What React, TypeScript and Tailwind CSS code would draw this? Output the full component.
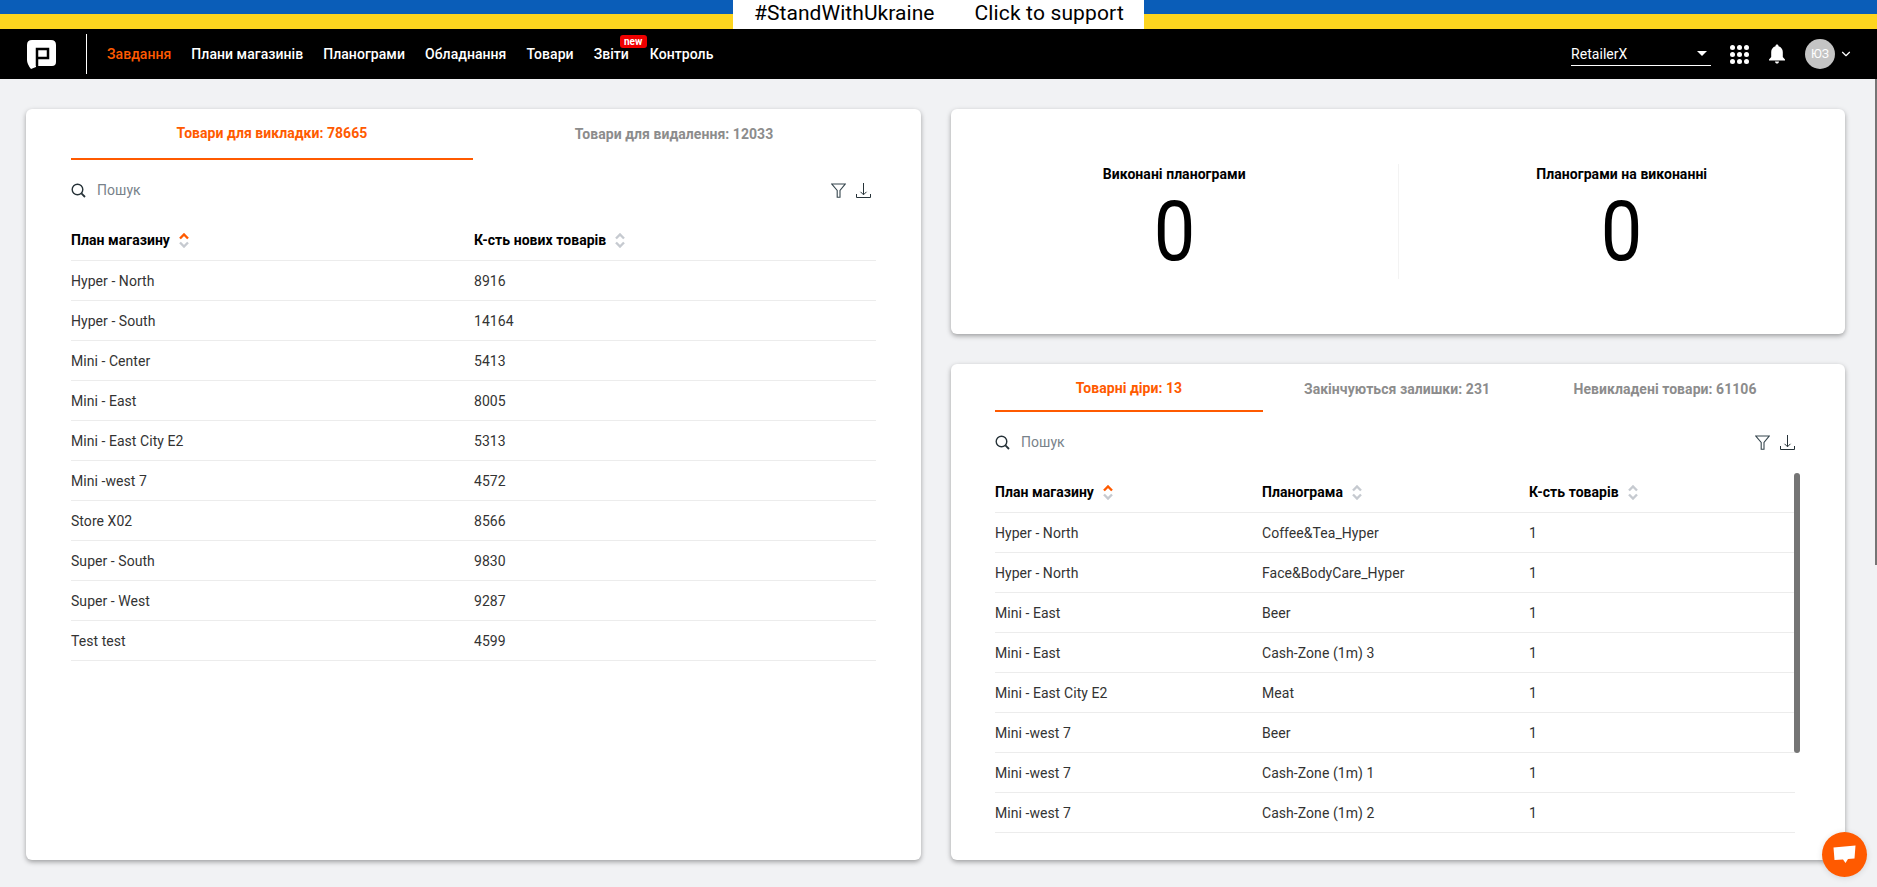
import { ChevronDown } from "lucide-react";

const storeRows = [
  ["Hyper - North", "8916"],
  ["Hyper - South", "14164"],
  ["Mini - Center", "5413"],
  ["Mini - East", "8005"],
  ["Mini - East City E2", "5313"],
  ["Mini -west 7", "4572"],
  ["Store X02", "8566"],
  ["Super - South", "9830"],
  ["Super - West", "9287"],
  ["Test test", "4599"],
];

const holeRows = [
  ["Hyper - North", "Coffee&Tea_Hyper", "1"],
  ["Hyper - North", "Face&BodyCare_Hyper", "1"],
  ["Mini - East", "Beer", "1"],
  ["Mini - East", "Cash-Zone (1m) 3", "1"],
  ["Mini - East City E2", "Meat", "1"],
  ["Mini -west 7", "Beer", "1"],
  ["Mini -west 7", "Cash-Zone (1m) 1", "1"],
  ["Mini -west 7", "Cash-Zone (1m) 2", "1"],
];

const navItems = ["Плани магазинів", "Планограми", "Обладнання", "Товари"];

function Logo() {
  return (
    <svg width="29" height="29" viewBox="0 0 29 29" className="shrink-0">
      <path d="M5 0H24Q29 0 29 5V22Q29 26 25 26H9V27L4 29Q0 24 0 20V5Q0 0 5 0Z" fill="#fff" />
      <path d="M10 26V9H21V18H10" fill="none" stroke="#000" strokeWidth="2.5" />
    </svg>
  );
}

function SortIcon({ active = false }: { active?: boolean }) {
  return (
    <svg width="10" height="15" viewBox="0 0 10 15" className="shrink-0">
      <path d="M1 5.5L5 1.5L9 5.5" fill="none" stroke={active ? "#ff5a00" : "#c6cad0"} strokeWidth="2.4" />
      <path d="M1 9.5L5 13.5L9 9.5" fill="none" stroke="#c6cad0" strokeWidth="2.4" />
    </svg>
  );
}

function Toolbar() {
  return (
    <div className="flex h-[40px] items-center justify-between">
      <div className="flex items-center gap-[11px]">
        <svg width="15" height="15" viewBox="0 0 15 15" fill="none" stroke="#263238" strokeWidth="1.4">
          <circle cx="6.5" cy="6.5" r="5.3" />
          <path d="M10.4 10.4L14 14" strokeWidth="1.8" />
        </svg>
        <span className="text-sm text-[#78828a]">Пошук</span>
      </div>
      <div className="flex items-center gap-[10px]">
        <svg width="15" height="15" viewBox="0 0 15 15" fill="none" stroke="#37474f" strokeWidth="1.1">
          <path d="M0.8 1H14.2L9 7.5V14.3H6.2V7.5Z" />
        </svg>
        <svg width="15" height="15" viewBox="0 0 15 15" fill="none" stroke="#263238" strokeWidth="1">
          <path d="M7.5 0V11.5M4.5 8.8L7.5 11.8L10.5 8.8" />
          <path d="M0.5 11V14.5H14.5V11" />
        </svg>
      </div>
    </div>
  );
}

function HeaderCell({ label, active = false, width }: { label: string; active?: boolean; width: string }) {
  return (
    <div className={`flex items-center gap-[9px] ${width}`}>
      <span className="text-sm font-bold text-black">{label}</span>
      <SortIcon active={active} />
    </div>
  );
}

export default function App() {
  return (
    <div className="relative flex h-screen flex-col overflow-hidden bg-[#f1f2f4] font-['Roboto',sans-serif] tracking-[0.05px]">
      {/* Banner */}
      <div className="relative h-[29px] shrink-0">
        <div className="h-[14px] bg-[#0a5db8]" />
        <div className="h-[15px] bg-[#fdd51f]" />
        <div className="absolute left-[733px] top-0 flex h-[29px] w-[411px] items-center justify-center gap-[40px] bg-white pb-[1px] pl-[1px] text-[21px] text-black">
          <span>#StandWithUkraine</span>
          <span className="tracking-[0.15px]">Click to support</span>
        </div>
      </div>

      {/* Navbar */}
      <header className="flex h-[50px] shrink-0 items-center bg-black pl-[27px] pr-[24px]">
        <Logo />
        <div className="ml-[30px] mr-[20px] h-[40px] w-px bg-white" />
        <nav className="flex items-center gap-5 text-sm font-medium text-white">
          <span className="text-[#ff5a00]">Завдання</span>
          {navItems.map((item) => (
            <span key={item}>{item}</span>
          ))}
          <span className="relative">
            Звіти
            <span className="absolute left-[26px] top-[-9px] flex h-[13px] w-[27px] items-center justify-center rounded-[3px] bg-[#f00000] text-[10px] font-bold leading-none text-white">
              new
            </span>
          </span>
          <span className="ml-px">Контроль</span>
        </nav>

        <div className="ml-auto flex items-center">
          <div className="flex h-[24px] w-[140px] items-center justify-between border-b border-white pr-[4px] text-sm text-white">
            <span>RetailerX</span>
            <span className="h-0 w-0 border-x-[5px] border-t-[5px] border-x-transparent border-t-white" />
          </div>
          <div className="ml-[19px] grid grid-cols-3 gap-[2px]">
            {Array.from({ length: 9 }).map((_, i) => (
              <span key={i} className="h-[5px] w-[5px] rounded-full bg-white" />
            ))}
          </div>
          <svg width="18" height="20" viewBox="0 0 18 20" fill="#fff" className="ml-[19px]">
            <path d="M9 0.5C8 0.5 7.5 1.2 7.5 2.2C4.8 3 3.2 5.2 3.2 8V13L1 15.5V16.5H17V15.5L14.8 13V8C14.8 5.2 13.2 3 10.5 2.2C10.5 1.2 10 0.5 9 0.5Z" />
            <path d="M7 17.5H11C11 18.8 10 19.6 9 19.6C8 19.6 7 18.8 7 17.5Z" />
          </svg>
          <div className="ml-[19px] flex h-[30px] w-[30px] items-center justify-center rounded-full bg-[#c4c4c4] text-xs text-white">
            ЮЗ
          </div>
          <ChevronDown className="ml-[4px] h-[14px] w-[14px] text-white" strokeWidth={2} />
        </div>
      </header>

      {/* Content */}
      <main className="flex flex-1 gap-[30px] pl-[26px] pr-[32px] pt-[30px] pb-[27px]">
        {/* Left card */}
        <section className="w-[895px] shrink-0 rounded-md bg-white px-[45px] shadow-[0_2px_5px_rgba(0,0,0,0.35)]">
          <div className="flex h-[51px] text-sm font-bold">
            <div className="flex w-[402px] items-center justify-center border-b-2 border-[#ff5a00] pb-[2px] text-[#ff5a00]">
              Товари для викладки: 78665
            </div>
            <div className="flex w-[402px] items-center justify-center pb-[2px] text-[#8c8c8c]">
              Товари для видалення: 12033
            </div>
          </div>
          <div className="pr-[5px] pt-[10px]">
            <Toolbar />
          </div>
          <div className="mt-[10px] flex h-[41px] items-center border-b border-[#ececec]">
            <HeaderCell label="План магазину" active width="w-[403px]" />
            <HeaderCell label="К-сть нових товарів" width="flex-1" />
          </div>
          {storeRows.map(([store, count]) => (
            <div key={store} className="flex h-[40px] items-center border-b border-[#ececec] text-sm text-[#333]">
              <div className="w-[403px]">{store}</div>
              <div className="flex-1">{count}</div>
            </div>
          ))}
        </section>

        {/* Right column */}
        <div className="flex min-w-0 flex-1 flex-col gap-[30px]">
          <section className="flex h-[225px] items-center rounded-md bg-white shadow-[0_2px_5px_rgba(0,0,0,0.35)]">
            <div className="flex h-[115px] flex-1 flex-col items-center pb-[8px]">
              <div className="text-sm font-bold text-black">Виконані планограми</div>
              <div className="mt-[6px] scale-x-[0.88] text-[84px] font-normal leading-[84px] text-black">0</div>
            </div>
            <div className="h-[115px] w-px bg-[#f3f3f3]" />
            <div className="flex h-[115px] flex-1 flex-col items-center pb-[8px]">
              <div className="text-sm font-bold text-black">Планограми на виконанні</div>
              <div className="mt-[6px] scale-x-[0.88] text-[84px] font-normal leading-[84px] text-black">0</div>
            </div>
          </section>

          <section className="relative h-[496px] overflow-hidden rounded-md bg-white pl-[44px] pr-[50px] shadow-[0_2px_5px_rgba(0,0,0,0.35)]">
            <div className="flex h-[48px] text-sm font-bold">
              <div className="flex w-[268px] items-center justify-center border-b-2 border-[#ff5a00] pt-[1px] text-[#ff5a00]">
                Товарні діри: 13
              </div>
              <div className="flex w-[268px] items-center justify-center pt-[1px] text-[#8c8c8c]">
                Закінчуються залишки: 231
              </div>
              <div className="flex w-[264px] items-center justify-center pl-[4px] pt-[1px] text-[#8c8c8c]">
                Невикладені товари: 61106
              </div>
            </div>
            <div className="pt-[10px]">
              <Toolbar />
            </div>
            <div className="mt-[10px] flex h-[41px] items-center border-b border-[#ececec]">
              <HeaderCell label="План магазину" active width="w-[267px]" />
              <HeaderCell label="Планограма" width="w-[267px]" />
              <HeaderCell label="К-сть товарів" width="flex-1" />
            </div>
            {holeRows.map(([store, planogram, count], i) => (
              <div key={i} className="flex h-[40px] items-center border-b border-[#ececec] text-sm text-[#333]">
                <div className="w-[267px]">{store}</div>
                <div className="w-[267px]">{planogram}</div>
                <div className="flex-1">{count}</div>
              </div>
            ))}
            <div className="absolute left-[843px] top-[109px] h-[280px] w-[6px] rounded-[3px] bg-[#757575]" />
          </section>
        </div>
      </main>

      {/* Page scrollbar */}
      <div className="absolute right-0 top-[79px] h-[486px] w-[2px] bg-[#757575]" />

      {/* Chat button */}
      <button className="absolute left-[1822px] top-[832px] flex h-[45px] w-[45px] items-center justify-center rounded-full bg-[#ff5a00] shadow-[0_1px_6px_rgba(0,0,0,0.12)]">
        <svg width="23" height="19" viewBox="0 0 23 19" fill="#fff">
          <path d="M0.5 2.5L22.5 0.5L21.5 13.5L15 14L12.5 18L10 14.5L1.5 15Z" />
        </svg>
      </button>
    </div>
  );
}
